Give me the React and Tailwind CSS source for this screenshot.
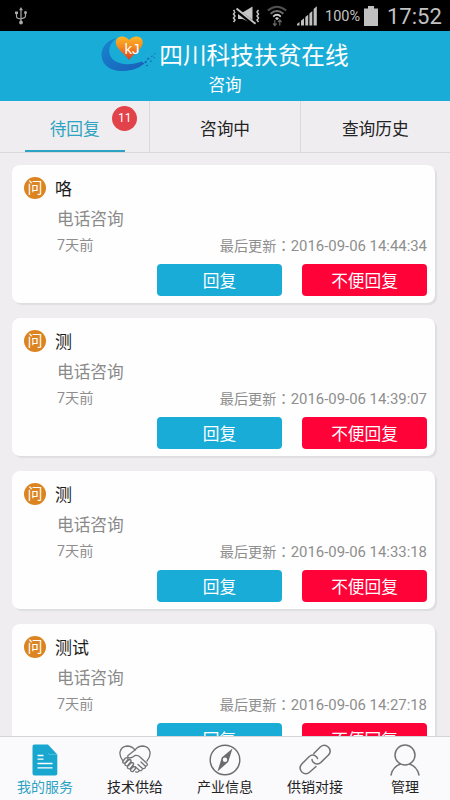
import { useState } from 'react';

const tabs = [
  { id: 'pending', label: '待回复', badge: 11 },
  { id: 'active', label: '咨询中' },
  { id: 'history', label: '查询历史' },
];

const questions = [
  { id: 1, title: '咯', type: '电话咨询', age: '7天前', updated: '2016-09-06 14:44:34' },
  { id: 2, title: '测', type: '电话咨询', age: '7天前', updated: '2016-09-06 14:39:07' },
  { id: 3, title: '测', type: '电话咨询', age: '7天前', updated: '2016-09-06 14:33:18' },
  { id: 4, title: '测试', type: '电话咨询', age: '7天前', updated: '2016-09-06 14:27:18' },
];

function UsbIcon() {
  return (
    <svg viewBox="0 0 14 18" className="w-3.5 h-[18px]" fill="none" stroke="#a9a9a9" strokeWidth="1.2">
      <path d="M7 2v13M2.5 6v3.5Q2.5 11 4 11.3L7 12.3M11.5 6v3Q11.5 10.5 10 10.9L7 11.8" />
      <path d="M7 0 9 3.2H5zM1 4.5h3v2.5H1z" fill="#a9a9a9" stroke="none" />
      <circle cx="11.5" cy="5.5" r="1.5" fill="#a9a9a9" stroke="none" />
      <circle cx="7" cy="15.5" r="1.9" fill="#a9a9a9" stroke="none" />
    </svg>
  );
}

function MuteVibrateIcon() {
  return (
    <svg viewBox="0 0 30 20" className="w-[30px] h-5" fill="none" stroke="#c4c4c4">
      <path d="M2.500 4l1.500 2-1.500 2 1.500 2-1.500 2 1.500 2-1.500 2M27.500 4l-1.500 2 1.500 2-1.500 2 1.500 2-1.500 2 1.500 2" strokeWidth="1.500" />
      <path d="M7 6.500h4.500L21.500.500v17L11.500 13H7z" fill="#c4c4c4" stroke="none" />
      <path d="M5 4 24.500 19" stroke="#000" strokeWidth="4" />
      <path d="M5.500 2.500 24.500 17.800" strokeWidth="2" />
    </svg>
  );
}

function WifiIcon() {
  return (
    <svg viewBox="0 0 20 22" className="w-5 h-[22px]" fill="none" strokeWidth="1.9">
      <path d="M.8 5.500Q10-2.200 19.200 5.500" stroke="#505050" />
      <path d="M3.600 8.700Q10 3.200 16.400 8.700" stroke="#707070" />
      <path d="M6.200 11.600Q10 8 13.800 11.600" stroke="#d0d0d0" />
      <path d="M8 13.200Q10 11.400 12 13.200L10 15.200z" fill="#d0d0d0" stroke="none" />
      <path d="M7.800 15v5.500M6 18.500l1.800 2 1.800-2M12.800 20.500V15M11 17l1.800-2 1.800 2" stroke="#666" strokeWidth="1.200" />
    </svg>
  );
}

function SignalIcon() {
  return (
    <svg viewBox="0 0 20 20" className="w-5 h-5" fill="#c0c0c0">
      <path d="M0 19.500v-1.500l2.500-2v3.500zM4 19.500v-4.700l3-2.500v7.200zM8.300 19.500v-8.500l2.900-2.200v10.700zM12.400 19.500V7.500L15.300 5v14.500zM16.600 19.500V3L19.800.2v19.300z" />
    </svg>
  );
}

function StatusBar() {
  return (
    <div className="h-[31px] shrink-0 bg-black flex items-center pl-3.5 pr-[9px] text-[#c2c2c2]">
      <UsbIcon />
      <div className="ml-auto flex items-center">
        <MuteVibrateIcon />
        <span className="ml-1.5"><WifiIcon /></span>
        <span className="ml-[10px]"><SignalIcon /></span>
        <span className="ml-2 mt-1 text-[14.5px] leading-none w-[36px] whitespace-nowrap">100%</span>
        <svg viewBox="0 0 14 20" className="ml-[3px] w-3.5 h-5" fill="#c0c0c0">
          <path d="M4 0h6v2.500h4V20H0V2.500h4z" />
        </svg>
        <span className="ml-[9px] mt-0.5 text-[22px] leading-none w-[54px] whitespace-nowrap">17:52</span>
      </div>
    </div>
  );
}

function Logo() {
  return (
    <svg viewBox="0 0 58 38" className="w-[58px] h-[38px]">
      <defs>
        <linearGradient id="heart" x1="0" y1="0" x2="0" y2="1">
          <stop offset="0" stopColor="#fbb62a" />
          <stop offset=".45" stopColor="#f58a1e" />
          <stop offset="1" stopColor="#dc3b1c" />
        </linearGradient>
        <linearGradient id="swoosh" x1="0" y1="0" x2="1" y2="1">
          <stop offset="0" stopColor="#1687cf" />
          <stop offset="1" stopColor="#1a5db8" />
        </linearGradient>
      </defs>
      <path d="M15.500 3C5 5.500.500 13 .500 20 .800 31 11 36.500 22 36 32 35.700 38 33 43.500 28.500L40.500 26.500C33 29.500 25 30 18.500 28 7 24.500 4 12 15.500 3z" fill="url(#swoosh)" />
      <path d="M28.200 25C25 20 14.800 14 14.800 7.500 14.800.500 24-.500 28.200 5 32.500-.500 41.800.500 41.800 7.500 41.800 14 31 20 28.200 25z" fill="url(#heart)" />
      <text x="23.500" y="18.500" fontSize="15" fill="#fff" fontFamily="Liberation Sans, sans-serif">kJ</text>
      <path d="M43 27l2.500-1.500.5 1.500-1.500 1.500zM46 23.500l2-1 .5 1.500-2 1zM49 26l1.500-1 .3 1.300-1.300 1zM50 21l1.500-.8.3 1.300-1.300.7zM52.500 22.500l1.200-.7.2 1-1.100.6zM53 18.500l1.200-.6.3 1-1.200.6zM45 30.500l1.800-1 .3 1.200-1.500.9z" fill="#1768bd" />
    </svg>
  );
}

function QuestionCard({ item }) {
  return (
    <div className="h-[138px] shrink-0 bg-[#fefefe] rounded-lg shadow-[2px_2px_1px_#dedde0] pl-3 pr-2 pt-[11px]">
      <div className="flex items-center h-6">
        <span className="w-[22px] h-[22px] rounded-full bg-[#db8420] text-white text-[15px] leading-[22px] text-center">问</span>
        <span className="ml-[9px] pt-[3px] text-[17px] text-[#1c1c1c]">{item.title}</span>
      </div>
      <div className="ml-[33px] mt-2 text-[16.7px] leading-6 text-[#8a8a8a]">{item.type}</div>
      <div className="ml-[33px] mt-[3px] h-5 flex justify-between text-[14.2px] leading-5 text-[#8e8e8e]">
        <span>{item.age}</span>
        <span className="whitespace-nowrap">
          最后更新<span className="font-['Noto_Sans_CJK_TC',sans-serif]">：</span>
          <span className="text-[14.9px]">{item.updated}</span>
        </span>
      </div>
      <div className="mt-[9px] flex justify-end gap-5 text-[16.7px] text-white">
        <button className="w-[125px] h-8 pt-[3px] leading-7 rounded bg-[#19acd7]">回复</button>
        <button className="w-[125px] h-8 pt-[3px] leading-7 rounded bg-[#ff0338]">不便回复</button>
      </div>
    </div>
  );
}

function DocIcon() {
  return (
    <svg viewBox="0 0 32 32" className="w-8 h-8">
      <path d="M5.500.500h13.500v8.200q0 1.700 1.700 1.700h7.600V29.500q0 2-2 2H5.500q-2 0-2-2V2.500q0-2 2-2z" fill="#19a7d0" />
      <path d="M19 .500 28.300 10.400H20.700q-1.700 0-1.700-1.700z" fill="#19a7d0" />
      <path d="M8.500 11.500h6M8.500 15.200h6M8.500 19.500h15M8.500 23.800h15" stroke="#fff" strokeWidth="1.300" />
    </svg>
  );
}

function HandshakeIcon() {
  return (
    <svg viewBox="0 0 32 32" className="w-8 h-8" fill="none" stroke="#737373" strokeWidth="1.300" strokeLinecap="round" strokeLinejoin="round">
      <path d="M4 17C-1 11 0 3 8 2q5 0 8 4 3-4 8-4c8 1 9 9 4 15" />
      <path d="M16 6 9 11.500q-1 2 1.500 2.500 2.500 0 5.500-2.500 3-.5 5 1.500l7 6.500q1 2-1.500 2.800L22 18" />
      <path d="M26.500 22.300q0 3-3 2.200L19 20.500M23.500 24.500q-.5 3-3.200 1.800L16.500 23M20.300 26.300q-1 2.700-3.500 1.500" />
      <path d="M4 17l2.500-3q2-1 2.500 1.300L6 19q-3 .5-2-2zM6 19.500l4-4q2.500 0 2 2L8.500 22q-3 0-2.500-2.500zM8.500 22.500l4-4q2.500 0 2 2L11 25q-3 0-2.500-2.500zM11.500 25.500l3-3q2.500 0 2 2L14 27.500q-2.500.5-2.500-2z" />
    </svg>
  );
}

function CompassIcon() {
  return (
    <svg viewBox="0 0 32 32" className="w-8 h-8" fill="none" stroke="#6c6c6c" strokeWidth="1.400">
      <circle cx="16" cy="16" r="14.800" />
      <path d="M23.500 4.500 12.800 13.500 8.500 27.500 19.200 18z" fill="#6c6c6c" stroke="none" />
      <circle cx="16" cy="15.800" r="2.200" fill="#faf9fc" stroke="none" />
    </svg>
  );
}

function LinkIcon() {
  return (
    <svg viewBox="0 0 32 32" className="w-8 h-8" fill="none" stroke="#737373" strokeWidth="1.500" strokeLinecap="round">
      <path d="M14.800 9.500 21.500 2.800q4-3.500 8 .5 3.500 4-.3 8l-7.500 7.300q-4.200 3.200-7.700-.5-1-1.300-1-2.500" />
      <path d="M18.500 14.500q-.5-1.500-1.500-2.200-3.500-2.600-7 .4L2.800 20q-3.500 4 0 8 4 3.500 8 0l6.200-5.500" />
    </svg>
  );
}

function PersonIcon() {
  return (
    <svg viewBox="0 0 32 32" className="w-8 h-8" fill="none" stroke="#737373" strokeWidth="1.500" strokeLinecap="round">
      <circle cx="16" cy="11" r="10" />
      <path d="M2 31q2-8.500 9.500-11M30 31q-2-8.500-9.500-11" />
    </svg>
  );
}

const navItems = [
  { label: '我的服务', Icon: DocIcon },
  { label: '技术供给', Icon: HandshakeIcon },
  { label: '产业信息', Icon: CompassIcon },
  { label: '供销对接', Icon: LinkIcon },
  { label: '管理', Icon: PersonIcon },
];

export default function App() {
  const [tab, setTab] = useState('pending');
  const [page, setPage] = useState(0);

  return (
    <div className="w-[450px] h-[800px] flex flex-col overflow-hidden bg-[#efedf0] font-[Roboto,'Noto_Sans_CJK_SC',sans-serif]">
      <StatusBar />

      <header className="h-[70px] shrink-0 bg-[#19acd7] text-white flex flex-col items-center">
        <div className="flex items-center h-[46px]">
          <Logo />
          <h1 className="pt-1.5 text-[23.7px] leading-none whitespace-nowrap">四川科技扶贫在线</h1>
        </div>
        <div className="text-[16.5px] leading-[18px]">咨询</div>
      </header>

      {/* Tabs */}
      <div className="h-[52px] shrink-0 flex border-b border-[#d9d8db]">
        {tabs.map((t) => (
          <button
            key={t.id}
            onClick={() => setTab(t.id)}
            className={`relative flex-1 pt-[7px] text-[16.7px] border-r border-[#d9d8db] last:border-r-0 ${tab === t.id ? 'text-[#2ba3c2]' : 'text-[#222]'}`}
          >
            {t.label}
            {t.badge && (
              <span className="absolute top-[5px] right-3 w-[25px] h-[25px] rounded-full bg-[#e2434a] text-white text-xs leading-[25px]">
                {t.badge}
              </span>
            )}
            {tab === t.id && <span className="absolute left-[25px] bottom-0 w-[100px] h-[2px] bg-[#2ba3c2]" />}
          </button>
        ))}
      </div>

      <main className="flex-1 min-h-0 overflow-hidden flex flex-col gap-[15px] pt-3 pl-3 pr-[15px]">
        {questions.map((q) => <QuestionCard key={q.id} item={q} />)}
      </main>

      {/* Bottom nav */}
      <nav className="h-[64px] shrink-0 flex bg-[#faf9fc] border-t border-[#d4d3d6]">
        {navItems.map(({ label, Icon }, i) => (
          <button
            key={label}
            onClick={() => setPage(i)}
            className={`flex-1 flex flex-col items-center pt-[7px] text-sm leading-[22px] ${page === i ? 'text-[#2ba3c2]' : 'text-[#222]'}`}
          >
            <Icon />
            {label}
          </button>
        ))}
      </nav>
    </div>
  );
}
